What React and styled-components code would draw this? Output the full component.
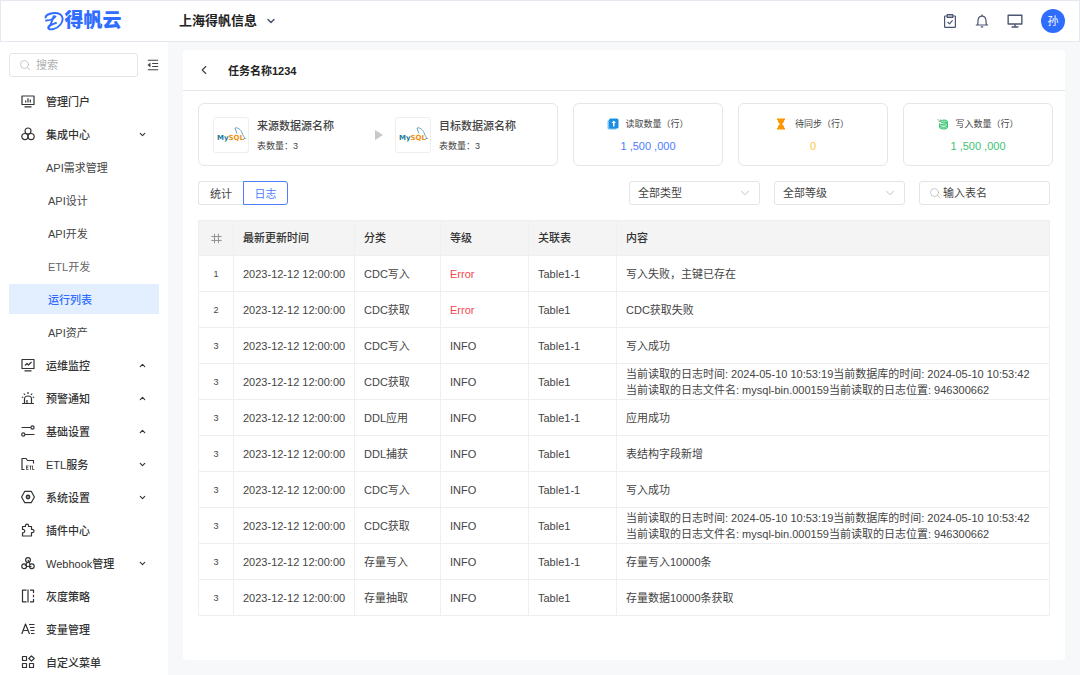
import React from 'react';
import styled, { createGlobalStyle, css } from 'styled-components'
import { ChevronDown, ChevronUp, ChevronLeft, Search } from 'lucide-react'

const App = () => {
   return (
      <Page>
         <GlobalStyle />
         <Header>
            <Logo href="#">
               <LogoMark />
               <span>得帆云</span>
            </Logo>
            <Company type="button">
               上海得帆信息
               <ChevronDown size={12} strokeWidth={3} color="#4a5670" />
            </Company>
            <HeaderActions>
               <IconButton type="button" aria-label="待办"><ClipboardIcon /></IconButton>
               <IconButton type="button" aria-label="通知"><BellIcon /></IconButton>
               <IconButton type="button" aria-label="桌面"><MonitorIcon /></IconButton>
               <Avatar type="button">孙</Avatar>
            </HeaderActions>
         </Header>
         <Body>
            <Sidebar>
               <SideTop>
                  <SearchBox>
                     <Search size={12} strokeWidth={1.5} color="#b8b8b8" />
                     <input type="text" placeholder="搜索" aria-label="搜索" />
                  </SearchBox>
                  <IconButton type="button" aria-label="收起菜单"><FoldIcon /></IconButton>
               </SideTop>
               <nav>
                  {menu.map((item) => (
                     <MenuItem key={item.label} href="#" $sub={item.sub} $first={item.wide} $active={item.active} $light={item.light}>
                        {item.icon && <MenuIcon>{item.icon}</MenuIcon>}
                        <span>{item.label}</span>
                        {item.arrow === 'down' && <ChevronDown size={9} strokeWidth={3} />}
                        {item.arrow === 'up' && <ChevronUp size={9} strokeWidth={3} />}
                     </MenuItem>
                  ))}
               </nav>
            </Sidebar>
            <Main>
               <Panel>
                  <PanelHeader>
                     <IconButton type="button" aria-label="返回"><ChevronLeft size={14} strokeWidth={2} color="#444" /></IconButton>
                     <h1>任务名称1234</h1>
                  </PanelHeader>
                  <PanelBody>
                     <Cards>
                        <FlowCard>
                           <Source>
                              <SourceLogo><MySqlLogo /></SourceLogo>
                              <SourceText>
                                 <strong>来源数据源名称</strong>
                                 <span>表数量：3</span>
                              </SourceText>
                           </Source>
                           <Arrow width="8" height="10" viewBox="0 0 8 10"><path d="M0 0L8 5L0 10Z" fill="#c8c8c8" /></Arrow>
                           <Source>
                              <SourceLogo><MySqlLogo /></SourceLogo>
                              <SourceText>
                                 <strong>目标数据源名称</strong>
                                 <span>表数量：3</span>
                              </SourceText>
                           </Source>
                        </FlowCard>
                        {stats.map((stat) => (
                           <StatCard key={stat.label}>
                              <StatLabel>{stat.icon}{stat.label}</StatLabel>
                              <StatValue $color={stat.color}>{stat.value}</StatValue>
                           </StatCard>
                        ))}
                     </Cards>
                     <Toolbar>
                        <Tabs>
                           <Tab type="button">统计</Tab>
                           <Tab type="button" $active>日志</Tab>
                        </Tabs>
                        <Filters>
                           <SelectBox>
                              <select aria-label="类型"><option>全部类型</option></select>
                              <ChevronDown size={14} strokeWidth={1.5} color="#b8b8b8" />
                           </SelectBox>
                           <SelectBox>
                              <select aria-label="等级"><option>全部等级</option></select>
                              <ChevronDown size={14} strokeWidth={1.5} color="#b8b8b8" />
                           </SelectBox>
                           <SearchBox $dark>
                              <Search size={12} strokeWidth={1.5} color="#b8b8b8" />
                              <input type="text" placeholder="输入表名" aria-label="输入表名" />
                           </SearchBox>
                        </Filters>
                     </Toolbar>
                     <Table>
                        <colgroup>
                           <col width="35" />
                           <col width="121" />
                           <col width="86" />
                           <col width="88" />
                           <col width="88" />
                           <col />
                        </colgroup>
                        <thead>
                           <tr>
                              <th><HashIcon /></th>
                              <th>最新更新时间</th>
                              <th>分类</th>
                              <th>等级</th>
                              <th>关联表</th>
                              <th>内容</th>
                           </tr>
                        </thead>
                        <tbody>
                           {logs.map(([no, type, level, table, text], i) => (
                              <tr key={i}>
                                 <td>{no}</td>
                                 <td>2023-12-12 12:00:00</td>
                                 <td>{type}</td>
                                 <Level $error={level === 'Error'}>{level}</Level>
                                 <td>{table}</td>
                                 <td>{text}</td>
                              </tr>
                           ))}
                        </tbody>
                     </Table>
                  </PanelBody>
               </Panel>
            </Main>
         </Body>
      </Page>
   )
}

export default App


const Line = ({ size = 14, children, ...rest }) => (
   <svg width={size} height={size} viewBox="0 0 14 14" fill="none" stroke="currentColor" strokeWidth="1.2" strokeLinejoin="round" {...rest}>
      {children}
   </svg>
)

const LogoMark = () => (
   <svg width="20" height="20" viewBox="0 0 20 20" fill="none" stroke="#2f6dff" strokeWidth="1.9" strokeLinecap="round">
      <path d="M1.500 6.500C2 3 9 1.500 13.500 2.200C19 3.200 20 9 16.500 13.500C13 18 6.500 19.500 4.500 17.500C3 15 8 13.500 12 12" />
      <path d="M10 5C8 8 8 12 5 16" />
      <path d="M2 9.500C5 9.500 9 8.500 11.500 5.500" />
   </svg>
)

const ClipboardIcon = () => (
   <Line stroke="#4a5670">
      <rect x="1.600" y="2" width="10.800" height="11.400" rx="0.600" />
      <path d="M4.200 0.700H9.800V3.400H4.200Z" fill="#c5cad6" />
      <path d="M4.600 8L6.500 9.900L9.600 6.400" />
   </Line>
)

const BellIcon = () => (
   <Line stroke="#4a5670">
      <path d="M0.800 11H13.200M2.400 11C3.200 9.500 2.800 7.500 3.100 5.800C3.500 3.600 5 2.200 7 2.200C9 2.200 10.500 3.600 10.900 5.800C11.200 7.500 10.800 9.500 11.600 11" />
      <path d="M7 0.600V2M5.800 12.800H8.200" />
   </Line>
)

const MonitorIcon = () => (
   <Line size={16} stroke="#4a5670">
      <path d="M1 2H13V9.600H1ZM7 9.600V12M4 12.200H10" />
   </Line>
)

const FoldIcon = () => (
   <Line size={12}>
      <path d="M1 1.500H13M6 5.200H13M6 8.800H13M1 12.500H13" />
      <path d="M4 4.200V9.800L0.600 7Z" fill="currentColor" stroke="none" />
   </Line>
)

const HashIcon = () => (
   <Line size={11} stroke="#8c8c8c">
      <path d="M4.500 1V13M9.500 1V13M0.500 4.500H13.500M0.500 9.500H13.500" />
   </Line>
)

const MySqlLogo = () => (
   <svg width="32" height="18" viewBox="0 0 32 18">
      <text x="2" y="14" fontFamily="DejaVu Sans" fontWeight="bold" fontSize="7">
         <tspan fill="#1f7a9c">My</tspan><tspan fill="#f29111">SQL</tspan>
      </text>
      <path d="M20 2C24 1 26.500 5 27.500 8C28.500 10.500 29.500 11.500 30.500 12.500L28.500 12.500M20 2C21 4 21 6 22 7.500" fill="none" stroke="#5b9ab5" strokeWidth="0.900" />
   </svg>
)

const ReadIcon = () => (
   <svg width="12" height="12" viewBox="0 0 12 12">
      <rect x="0.500" y="2" width="9" height="9.500" rx="1.500" fill="#7cc0f2" />
      <rect x="2" y="0.500" width="9.500" height="10" rx="1.500" fill="#1a8fe3" />
      <path d="M6.800 2.500L9 5H7.500V8.500H6V5H4.600Z" fill="#fff" />
   </svg>
)

const HourglassIcon = () => (
   <svg width="12" height="12" viewBox="0 0 12 12" fill="#ff9500">
      <path d="M0 0.500H8V2H7.300C7.300 4 6 5 5 6C6 7 7.300 8 7.300 10H8V11.500H0V10H0.700C0.700 8 2 7 3 6C2 5 0.700 4 0.700 2H0Z" />
   </svg>
)

const WriteIcon = () => (
   <svg width="12" height="12" viewBox="0 0 12 12" fill="none" stroke="#3cc474">
      <path d="M0.500 1L3 3.500M3.500 1.500V3.500H1.500" stroke="#8c9c92" strokeWidth="0.800" />
      <ellipse cx="7" cy="3.500" rx="3.500" ry="1.500" fill="#8fe0b0" />
      <path d="M2 5.500C3 7 10 7 10.500 4V9.500C10 11.500 3.500 11.500 2.500 9.500V5.500M2.500 8C4 9.600 9 9.600 10.500 8" fill="#8fe0b0" />
   </svg>
)

const menu = [
   { label: '管理门户', icon: <Line><path d="M1 2H13V10.500H1ZM3.500 12.800H10.500M4.700 8.500V6.500M7 8.500V4.200M9.300 8.500V5.500" /></Line> },
   {
      label: '集成中心',
      arrow: 'down',
      icon: <Line><circle cx="7" cy="4" r="3" /><circle cx="3.900" cy="9.600" r="3.100" /><circle cx="10.100" cy="9.600" r="3.100" /></Line>
   },
   { label: 'API需求管理', sub: true, wide: true },
   { label: 'API设计', sub: true },
   { label: 'API开发', sub: true },
   { label: 'ETL开发', sub: true, light: true },
   { label: '运行列表', sub: true, active: true },
   { label: 'API资产', sub: true },
   { label: '运维监控', arrow: 'up', icon: <Line><path d="M1 1.500H13V10.500H1ZM3.500 12.800H10.500M4 7.500L6 5.500L7.500 7L10.500 4" /></Line> },
   {
      label: '预警通知',
      arrow: 'up',
      icon: <Line><path d="M1 12.500H13M3.500 12.500V8C3.500 4 10.500 4 10.500 8V12.500M7 1V3M2.800 2.500L4 4M11.200 2.500L10 4M0.800 6L2.300 6.500M13.200 6L11.700 6.500M6 9V12" /></Line>
   },
   { label: '基础设置', arrow: 'up', icon: <Line><path d="M0.500 3.500H10M4 10.500H13.500" /><circle cx="11.500" cy="3.500" r="1.600" /><circle cx="2.300" cy="10.500" r="1.600" /></Line> },
   {
      label: 'ETL服务',
      arrow: 'down',
      icon: <Line><path d="M3.500 12.500H1V1.500H5L6.500 3.500H12.500V6.500" /><path d="M5.500 8.500V12.500M5.500 9H7.500M5.500 10.700H7.200M5.500 12.500H7.500M8.500 9H10.500M9.500 9V12.800M11.500 8.500V12.500H13.300" strokeWidth="0.800" /></Line>
   },
   { label: '系统设置', arrow: 'down', icon: <Line><path d="M3.800 1.300H10.200L13.400 7L10.200 12.700H3.800L0.600 7Z" /><circle cx="7" cy="7" r="1.600" strokeWidth="1.600" /></Line> },
   { label: '插件中心', icon: <Line><path d="M1.500 3.500H4.500C3.800 0.300 8.200 0.300 7.500 3.500H10.500V6.500C13.800 5.800 13.800 10.200 10.500 9.500V13H1.500V9.800C4.500 10.200 4.500 6 1.500 6.500Z" /></Line> },
   {
      label: 'Webhook管理',
      arrow: 'down',
      icon: <Line><circle cx="7" cy="4" r="2.400" /><circle cx="3.200" cy="10.300" r="2.400" /><circle cx="10.800" cy="10.300" r="2.400" /><path d="M7 4L9 8M6.500 6L4 10M5.500 10.500H10.500" /></Line>
   },
   { label: '灰度策略', icon: <Line><path d="M5.500 1.200H1.500V12.800H5.500M7 0.500V13.500M9 1.200H12.500V4M12.500 5.800V8.200M12.500 10V12.800H9" /></Line> },
   { label: '变量管理', icon: <Line><path d="M0.800 12L4.500 2L8.500 12M2.200 8.500H7M8 2.500H13.500M9 5.500H13.500M9.500 8.500H13.500M10 11.500H13.500" /></Line> },
   { label: '自定义菜单', icon: <Line><path d="M1.500 1.500H5.500V5.500H1.500ZM1.500 8.500H5.500V12.500H1.500ZM8.500 8.500H12.500V12.500H8.500Z" /><path d="M10.500 0.800L13.200 3.500L10.500 6.200L7.800 3.500Z" /></Line> },
]

const stats = [
   { label: '读取数量（行）', value: '1 ,500 ,000', color: '#4c7dff', icon: <ReadIcon /> },
   { label: '待同步（行）', value: '0', color: '#ffc53d', icon: <HourglassIcon /> },
   { label: '写入数量（行）', value: '1 ,500 ,000', color: '#3cc474', icon: <WriteIcon /> },
]

const position = (
   <>
      当前读取的日志时间: 2024-05-10 10:53:19当前数据库的时间: 2024-05-10 10:53:42<br />
      当前读取的日志文件名: mysql-bin.000159当前读取的日志位置: 946300662
   </>
)

const logs = [
   [1, 'CDC写入', 'Error', 'Table1-1', '写入失败，主键已存在'],
   [2, 'CDC获取', 'Error', 'Table1', 'CDC获取失败'],
   [3, 'CDC写入', 'INFO', 'Table1-1', '写入成功'],
   [3, 'CDC获取', 'INFO', 'Table1', position],
   [3, 'DDL应用', 'INFO', 'Table1-1', '应用成功'],
   [3, 'DDL捕获', 'INFO', 'Table1', '表结构字段新增'],
   [3, 'CDC写入', 'INFO', 'Table1-1', '写入成功'],
   [3, 'CDC获取', 'INFO', 'Table1', position],
   [3, '存量写入', 'INFO', 'Table1-1', '存量写入10000条'],
   [3, '存量抽取', 'INFO', 'Table1', '存量数据10000条获取'],
]

const GlobalStyle = createGlobalStyle`
   * {
      box-sizing: border-box;
   }
   body {
      margin: 0;
      color: #444;
      font-family: "Liberation Sans", "Noto Sans CJK SC", sans-serif;
      font-size: 11px;
   }
   button, input, select {
      font: inherit;
      color: inherit;
   }
   svg {
      flex: none;
   }
`
const Page = styled.div`
   display: flex;
   flex-direction: column;
   height: 100vh;
   overflow: hidden;
   background: #f6f8fa;
`
const Header = styled.header`
   display: flex;
   align-items: center;
   flex: none;
   height: 42px;
   padding: 0 14px 0 0;
   border: 1px solid #e6e8f0;
   background: #fff;
`
const Logo = styled.a`
   display: flex;
   align-items: center;
   justify-content: center;
   width: 164px;
   color: #2f6dff;
   font-size: 19px;
   font-weight: 900;
   line-height: 24px;
   text-decoration: none;
`
const Company = styled.button`
   display: flex;
   align-items: center;
   gap: 8px;
   margin-left: 14px;
   padding: 0;
   border: 0;
   background: none;
   color: #222;
   font-size: 13px;
   font-weight: 600;
   line-height: 16px;
`
const HeaderActions = styled.div`
   display: flex;
   align-items: center;
   gap: 18px;
   margin-left: auto;
`
const IconButton = styled.button`
   display: flex;
   padding: 0;
   border: 0;
   background: none;
   color: #444;
`
const Avatar = styled.button`
   width: 24px;
   height: 24px;
   padding: 0;
   border: 0;
   border-radius: 50%;
   background: #2f6dff;
   color: #fff;
   line-height: 24px;
`
const Body = styled.div`
   display: flex;
   flex: 1;
   min-height: 0;
`
const Sidebar = styled.aside`
   flex: none;
   width: 168px;
   overflow: hidden;
   background: #fff;
`
const SideTop = styled.div`
   display: flex;
   align-items: center;
   gap: 9px;
   padding: 11px 9px 9px;
`
const SearchBox = styled.label`
   display: flex;
   align-items: center;
   gap: ${(props) => (props.$dark ? '2px' : '5px')};
   width: 131px;
   height: 24px;
   padding: 0 9px;
   border: 1px solid #e4e4e4;
   border-radius: 3px;
   background: #fff;

   input {
      width: 100%;
      min-width: 0;
      padding: 0;
      border: 0;
      outline: 0;
      background: none;
   }
   input::placeholder {
      color: ${(props) => (props.$dark ? '#444' : '#b0b0b0')};
      opacity: 1;
   }
`
const MenuItem = styled.a`
   display: flex;
   align-items: center;
   height: 30px;
   margin: 0 9px 3px;
   padding: 0 12px;
   color: #333;
   font-weight: 500;
   text-decoration: none;

   span {
      flex: 1;
   }
   ${(props) => props.$sub && css`
      padding-left: ${props.$first ? '37px' : '39px'};
      color: ${props.$light ? '#666' : '#444'};
      font-weight: 400;
   `}
   ${(props) => props.$active && css`
      background: #e3efff;
      color: #2f6dff;
      font-weight: 500;
   `}
`
const MenuIcon = styled.i`
   display: flex;
   width: 25px;
`
const Main = styled.main`
   flex: 1;
   min-width: 0;
   padding: 8px 15px 15px;
`
const Panel = styled.section`
   height: 100%;
   border-radius: 3px;
   background: #fff;
`
const PanelHeader = styled.div`
   display: flex;
   align-items: center;
   gap: 17px;
   height: 41px;
   padding: 0 14px;
   border-bottom: 1px solid #e6e6e6;

   h1 {
      margin: 0;
      color: #222;
      font-size: 11px;
      font-weight: 600;
   }
`
const PanelBody = styled.div`
   padding: 12px 15px;
`
const Cards = styled.div`
   display: grid;
   grid-template-columns: 12fr 5fr 5fr 5fr;
   gap: 15px;
   margin-right: -3px;
`
const Card = styled.div`
   display: flex;
   height: 63px;
   border: 1px solid #e6e6e6;
   border-radius: 6px;
`
const FlowCard = styled(Card)`
   align-items: center;
   padding: 0 14px;
`
const Source = styled.div`
   display: flex;
   align-items: center;
   gap: 8px;
`
const SourceLogo = styled.div`
   display: flex;
   align-items: center;
   justify-content: center;
   width: 36px;
   height: 36px;
   border: 1px solid #eee;
   border-radius: 3px;
`
const SourceText = styled.div`
   display: flex;
   flex-direction: column;
   gap: 4px;
   padding-top: 2px;
   line-height: 16px;

   strong {
      font-weight: 500;
   }
   span {
      font-size: 9px;
   }
`
const Arrow = styled.svg`
   margin: 0 12px 0 auto;

   & + div {
      margin-right: 27px;
   }
`
const StatCard = styled(Card)`
   flex-direction: column;
   align-items: center;
   justify-content: center;
   gap: 6px;
`
const StatLabel = styled.div`
   display: flex;
   align-items: center;
   gap: 6px;
   font-size: 9px;
   line-height: 16px;
`
const StatValue = styled.div`
   color: ${(props) => props.$color};
   line-height: 16px;
`
const Toolbar = styled.div`
   display: flex;
   justify-content: space-between;
   margin: 15px 0;
`
const Tabs = styled.div`
   display: flex;
`
const Tab = styled.button`
   width: 45px;
   height: 24px;
   padding: 0;
   border: 1px solid #e4e4e4;
   border-right: 0;
   border-radius: 3px 0 0 3px;
   background: #fff;

   ${(props) => props.$active && css`
      border: 1px solid #4c7dff;
      border-radius: 0 3px 3px 0;
      color: #4c7dff;
   `}
`
const Filters = styled.div`
   display: flex;
   gap: 14px;
`
const SelectBox = styled.div`
   display: grid;
   align-items: center;
   width: 131px;
   height: 24px;
   border: 1px solid #e4e4e4;
   border-radius: 3px;

   select, svg {
      grid-area: 1 / 1;
   }
   select {
      height: 22px;
      padding: 0 8px;
      border: 0;
      appearance: none;
      background: none;
   }
   svg {
      justify-self: end;
      margin-right: 7px;
      pointer-events: none;
   }
`
const Table = styled.table`
   width: 100%;
   border-collapse: collapse;
   table-layout: fixed;

   th, td {
      height: 36px;
      padding: 0 9px;
      border: 1px solid #efefef;
      line-height: 16px;
      text-align: left;
      font-weight: 400;
      white-space: nowrap;
   }
   th {
      height: 35px;
      background: #f4f4f4;
      color: #333;
      font-weight: 500;
   }
   th:first-child, td:first-child {
      padding: 0;
      text-align: center;
   }
   th svg {
      display: block;
      margin: 0 auto;
   }
   td:first-child {
      font-size: 9px;
   }
`
const Level = styled.td`
   color: ${(props) => (props.$error ? '#f5474c' : 'inherit')};
`
